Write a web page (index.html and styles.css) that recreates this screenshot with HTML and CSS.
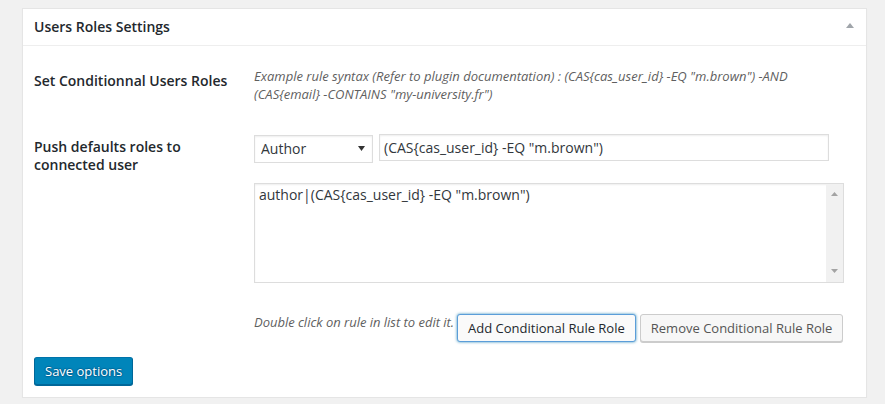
FILE: index.html
```html
<!DOCTYPE html>
<html lang="en">
<head>
<meta charset="utf-8">
<title>Users Roles Settings</title>
<link rel="stylesheet" href="styles.css">
</head>
<body>
<div class="postbox">
  <div class="hndle">
    <h2 class="hndle-title">Users Roles Settings</h2>
    <span class="toggle-indicator"><svg width="8" height="5" viewBox="0 0 8 5"><polygon points="0,5 8,5 4,0" fill="#a0a5aa"/></svg></span>
  </div>
  <div class="inside">
    <div class="form-row">
      <div class="th">Set Conditionnal Users Roles</div>
      <div class="td">
        <p class="description">Example rule syntax (Refer to plugin documentation) : (CAS{cas_user_id} -EQ "m.brown") -AND (CAS{email} -CONTAINS "my-university.fr")</p>
      </div>
    </div>
    <div class="form-row">
      <div class="th">Push defaults roles to connected user</div>
      <div class="td">
        <div class="rule-inputs">
          <div class="select-wrap">
            <select class="role-select"><option>Author</option></select>
            <span class="select-arrow"><svg width="7" height="5" viewBox="0 0 7 5"><polygon points="0,0 7,0 3.5,5" fill="#333"/></svg></span>
          </div>
          <input class="rule-input" type="text" value="(CAS{cas_user_id} -EQ &quot;m.brown&quot;)">
        </div>
        <div class="rules-list">
          <div class="rules-text">author|(CAS{cas_user_id} -EQ "m.brown")</div>
          <div class="scrollbar">
            <svg width="7" height="4" viewBox="0 0 7 4"><polygon points="0,4 7,4 3.5,0" fill="#a3a3a3"/></svg>
            <svg width="7" height="4" viewBox="0 0 7 4"><polygon points="0,0 7,0 3.5,4" fill="#a3a3a3"/></svg>
          </div>
        </div>
        <div class="actions">
          <span class="description hint">Double click on rule in list to edit it.</span>
          <button class="button is-focused" type="button">Add Conditional Rule Role</button>
          <button class="button" type="button">Remove Conditional Rule Role</button>
        </div>
      </div>
    </div>
    <div class="submit">
      <button class="button-primary" type="button">Save options</button>
    </div>
  </div>
</div>
</body>
</html>
```

FILE: styles.css
```css
* { box-sizing: border-box; }

body {
  margin: 0;
  background: #f1f1f1;
  font-family: "Open Sans", "Liberation Sans", sans-serif;
  color: #444;
  font-size: 13px;
}

.postbox {
  margin: 8px 0 0 22px;
  width: 845px;
  background: #fff;
  border: 1px solid #e5e5e5;
  box-shadow: 0 1px 1px rgba(0, 0, 0, 0.04);
}

.hndle {
  display: flex;
  align-items: center;
  justify-content: space-between;
  padding: 8px 12px 8px 11px;
  border-bottom: 1px solid #eee;
}

.hndle-title {
  margin: 0;
  font-size: 14px;
  font-weight: 600;
  line-height: 19.6px;
  color: #23282d;
}

.toggle-indicator {
  display: flex;
  margin-top: -3px;
}

.inside {
  padding: 6px 11px 12px 11px;
}

.form-row {
  display: grid;
  grid-template-columns: 220px 1fr;
}

.th {
  padding: 20px 10px 0 0;
  width: 210px;
  font-size: 14px;
  font-weight: 600;
  line-height: 18px;
  color: #23282d;
}

.td {
  padding: 15px 10px 15px 0;
  min-width: 0;
}

.description {
  margin: 0;
  font-size: 13px;
  font-style: italic;
  line-height: 18px;
  color: #5f5f5f;
}

.rule-inputs {
  display: flex;
  align-items: flex-start;
  gap: 6px;
}

.select-wrap {
  position: relative;
  margin-top: 2px;
}

.role-select {
  -webkit-appearance: none;
  appearance: none;
  display: block;
  width: 119px;
  height: 28px;
  margin: 0;
  padding: 0 20px 0 6px;
  border: 1px solid #ddd;
  border-radius: 0;
  background: #fff;
  box-shadow: inset 0 1px 2px rgba(0, 0, 0, 0.07);
  font-family: "Open Sans", "Liberation Sans", sans-serif;
  font-size: 14px;
  color: #32373c;
}

.select-arrow {
  position: absolute;
  right: 8px;
  top: 11px;
  display: flex;
  pointer-events: none;
}

.rule-input {
  display: block;
  width: 450px;
  height: 27px;
  margin: 1px 0 0 0;
  padding: 0 4px;
  border: 1px solid #ddd;
  box-shadow: inset 0 1px 2px rgba(0, 0, 0, 0.07);
  font-family: "Open Sans", "Liberation Sans", sans-serif;
  font-size: 14px;
  color: #32373c;
  background: #fff;
}

.rules-list {
  display: flex;
  width: 590px;
  height: 100px;
  margin-top: 20px;
  border: 1px solid #ddd;
  box-shadow: inset 0 1px 2px rgba(0, 0, 0, 0.07);
  background: #fff;
}

.rules-text {
  flex: 1;
  padding: 1px 4px;
  font-size: 14px;
  line-height: 19px;
  color: #32373c;
}

.scrollbar {
  width: 17px;
  background: #f1f1f1;
  display: flex;
  flex-direction: column;
  justify-content: space-between;
  align-items: center;
  padding: 8px 0 9px;
}

.scrollbar svg { display: block; }

.actions {
  display: flex;
  align-items: flex-start;
  gap: 3px;
  margin-top: 30px;
}

.hint {
  white-space: nowrap;
  flex-shrink: 0;
  letter-spacing: -0.02px;
}

.button {
  flex-shrink: 0;
  margin-top: 1px;
  height: 28px;
  padding: 0 10px 1px;
  border: 1px solid #ccc;
  border-radius: 3px;
  background: #f7f7f7;
  box-shadow: 0 1px 0 #ccc;
  font-family: "Open Sans", "Liberation Sans", sans-serif;
  font-size: 13px;
  line-height: 26px;
  color: #555;
  white-space: nowrap;
}

.button.is-focused {
  background: #fafafa;
  border-color: #5b9dd9;
  box-shadow: 0 0 3px rgba(0, 115, 170, 0.8);
  color: #23282d;
}

.button + .button {
  margin-left: 1px;
}

.submit {
  padding: 0;
}

.button-primary {
  display: block;
  height: 28px;
  padding: 0 10px 1px;
  border: 1px solid #0073aa;
  border-color: #0073aa #006799 #006799;
  border-radius: 3px;
  background: #0085ba;
  box-shadow: 0 1px 0 #006799;
  text-shadow: 0 -1px 1px #006799, 1px 0 1px #006799, 0 1px 1px #006799, -1px 0 1px #006799;
  font-family: "Open Sans", "Liberation Sans", sans-serif;
  font-size: 13px;
  line-height: 26px;
  color: #fff;
}
```
